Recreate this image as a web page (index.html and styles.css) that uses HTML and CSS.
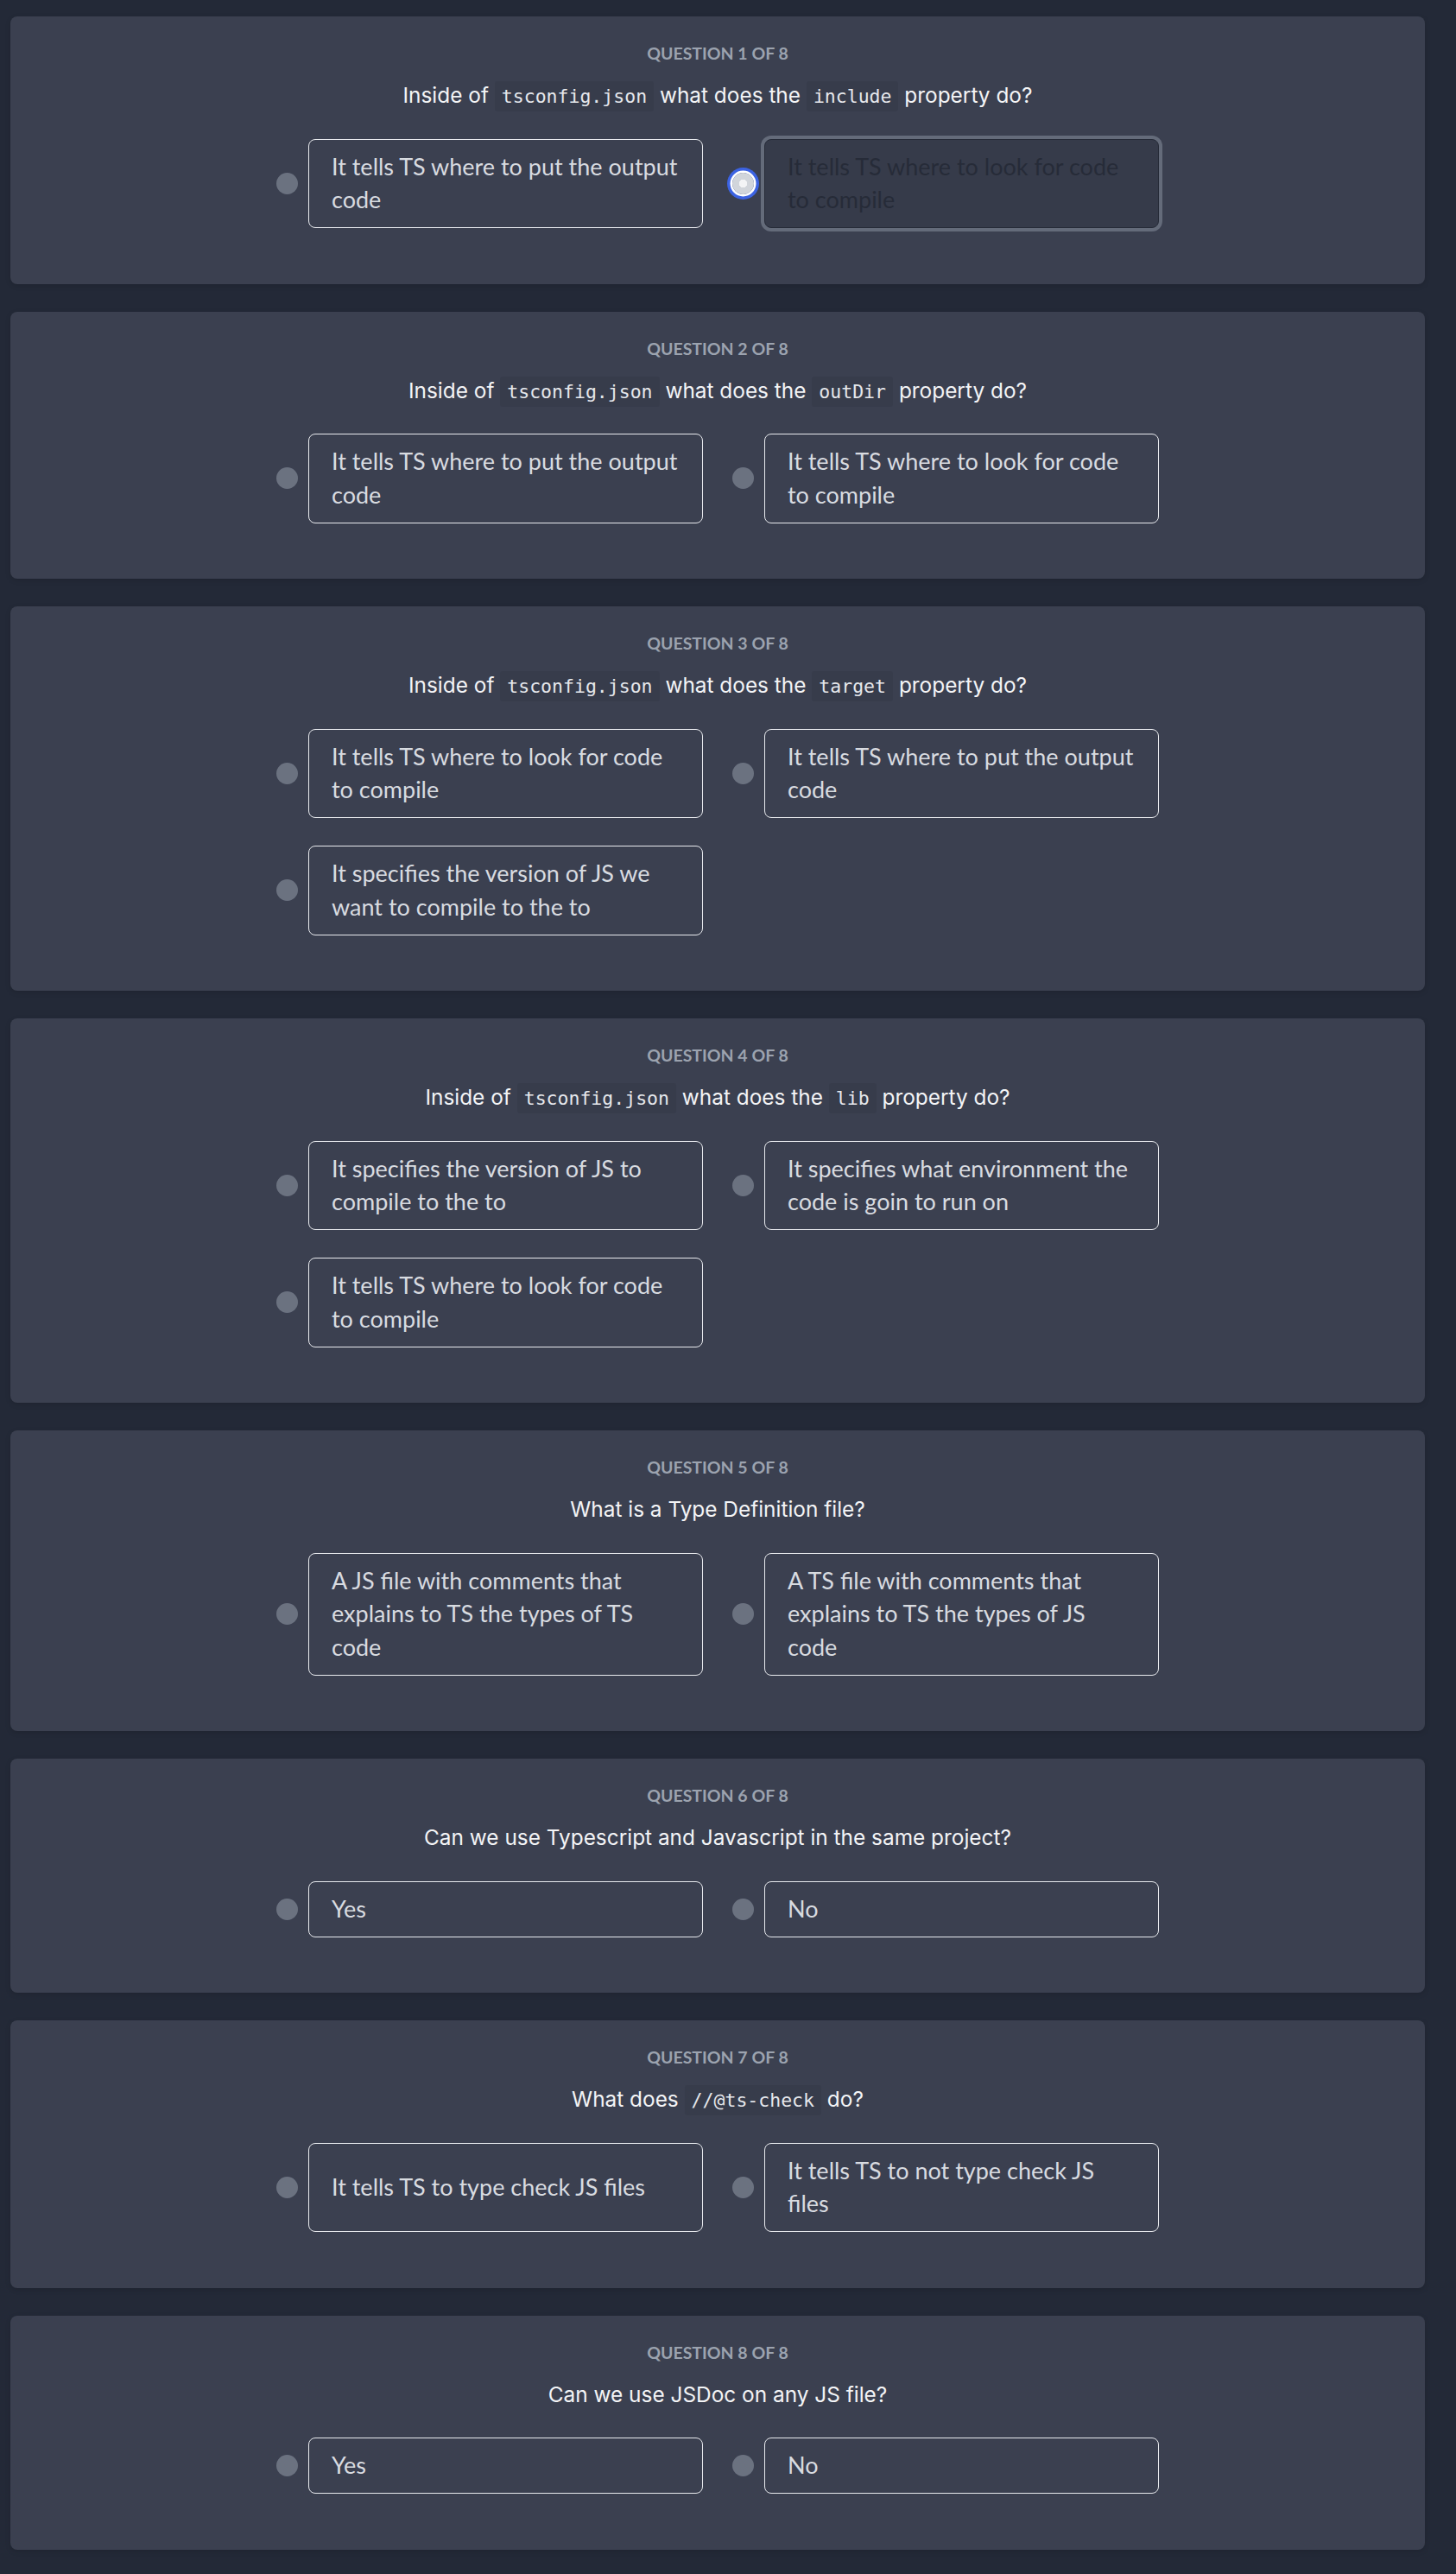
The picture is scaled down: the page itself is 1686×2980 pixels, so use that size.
FILE: index.html
```html
<!DOCTYPE html>
<html lang="en">
<head>
<meta charset="utf-8">
<title>Quiz</title>
<link rel="stylesheet" href="styles.css">
</head>
<body>
<main class="quiz">
  <section class="card">
    <div class="label">Question 1 of 8</div>
    <h2 class="question">Inside of <code>tsconfig.json</code> what does the <code>include</code> property do?</h2>
    <div class="options">
      <label class="option"><span class="radio"></span><span class="box">It tells TS where to put the output code</span></label>
      <label class="option selected"><span class="radio"></span><span class="box">It tells TS where to look for code to compile</span></label>
    </div>
  </section>

  <section class="card">
    <div class="label">Question 2 of 8</div>
    <h2 class="question">Inside of <code>tsconfig.json</code> what does the <code>outDir</code> property do?</h2>
    <div class="options">
      <label class="option"><span class="radio"></span><span class="box">It tells TS where to put the output code</span></label>
      <label class="option"><span class="radio"></span><span class="box">It tells TS where to look for code to compile</span></label>
    </div>
  </section>

  <section class="card">
    <div class="label">Question 3 of 8</div>
    <h2 class="question">Inside of <code>tsconfig.json</code> what does the <code>target</code> property do?</h2>
    <div class="options">
      <label class="option"><span class="radio"></span><span class="box">It tells TS where to look for code to compile</span></label>
      <label class="option"><span class="radio"></span><span class="box">It tells TS where to put the output code</span></label>
      <label class="option"><span class="radio"></span><span class="box">It specifies the version of JS we want to compile to the to</span></label>
    </div>
  </section>

  <section class="card">
    <div class="label">Question 4 of 8</div>
    <h2 class="question">Inside of <code>tsconfig.json</code> what does the <code>lib</code> property do?</h2>
    <div class="options">
      <label class="option"><span class="radio"></span><span class="box">It specifies the version of JS to compile to the to</span></label>
      <label class="option"><span class="radio"></span><span class="box">It specifies what environment the code is goin to run on</span></label>
      <label class="option"><span class="radio"></span><span class="box">It tells TS where to look for code to compile</span></label>
    </div>
  </section>

  <section class="card">
    <div class="label">Question 5 of 8</div>
    <h2 class="question">What is a Type Definition file?</h2>
    <div class="options">
      <label class="option"><span class="radio"></span><span class="box">A JS file with comments that explains to TS the types of TS code</span></label>
      <label class="option"><span class="radio"></span><span class="box">A TS file with comments that explains to TS the types of JS code</span></label>
    </div>
  </section>

  <section class="card">
    <div class="label">Question 6 of 8</div>
    <h2 class="question">Can we use Typescript and Javascript in the same project?</h2>
    <div class="options">
      <label class="option"><span class="radio"></span><span class="box">Yes</span></label>
      <label class="option"><span class="radio"></span><span class="box">No</span></label>
    </div>
  </section>

  <section class="card">
    <div class="label">Question 7 of 8</div>
    <h2 class="question">What does <code>//@ts-check</code> do?</h2>
    <div class="options">
      <label class="option"><span class="radio"></span><span class="box">It tells TS to type check JS files</span></label>
      <label class="option"><span class="radio"></span><span class="box">It tells TS to not type check JS files</span></label>
    </div>
  </section>

  <section class="card">
    <div class="label">Question 8 of 8</div>
    <h2 class="question">Can we use JSDoc on any JS file?</h2>
    <div class="options">
      <label class="option"><span class="radio"></span><span class="box">Yes</span></label>
      <label class="option"><span class="radio"></span><span class="box">No</span></label>
    </div>
  </section>
</main>
</body>
</html>
```

FILE: styles.css
```css
* { box-sizing: border-box; }

html, body {
  margin: 0;
  background: #232937;
}

body {
  font-family: "Lato", "Noto Sans", sans-serif;
}

.quiz {
  display: flex;
  flex-direction: column;
  gap: 32px;
  padding: 19px 36px 28px 12px;
}

.card {
  background: #3b4050;
  border-radius: 8px;
  padding: 29px 0 64.5px;
  box-shadow: 0 2px 6px rgba(0, 0, 0, 0.12);
  display: flex;
  flex-direction: column;
  align-items: center;
}

.label {
  font-family: "Lato", sans-serif;
  font-weight: 700;
  font-size: 19.5px;
  line-height: 28px;
  text-transform: uppercase;
  color: #9ca3af;
}

.question {
  margin: 18px 0 34.5px;
  font-family: "Inter", "Liberation Sans", sans-serif;
  font-weight: 400;
  font-size: 24.4px;
  line-height: 32px;
  height: 32px;
  color: #f3f4f6;
  text-align: center;
}

.question code {
  font-family: "DejaVu Sans Mono", monospace;
  font-size: 21.5px;
  line-height: 1;
  color: #e5e7eb;
  background: rgba(0, 0, 0, 0.06);
  padding: 5px 8px;
  border-radius: 3px;
}

.options {
  display: grid;
  grid-template-columns: 494px 494px;
  gap: 32px 34px;
}

.option {
  display: flex;
  align-items: stretch;
  gap: 12px;
}

.radio {
  flex: 0 0 25px;
  width: 25px;
  height: 25px;
  align-self: center;
  border-radius: 50%;
  background: #6b7280;
}

.box {
  flex: 1;
  display: flex;
  align-items: center;
  border: 1px solid #e8eaee;
  border-radius: 8px;
  padding: 12.25px 26px;
  font-size: 27px;
  line-height: 38.5px;
  color: #d8dbe0;
}

.selected .radio {
  background: radial-gradient(circle, #f3f4f6 0 4.5px, #d1d5db 5px);
  box-shadow: 0 0 0 2.5px #ffffff, 0 0 0 6px #3c63e2;
}

.selected .box {
  background: #363b4a;
  border-color: #262b38;
  box-shadow: 0 0 0 4px #646b7a;
  color: #262b38;
}
```
